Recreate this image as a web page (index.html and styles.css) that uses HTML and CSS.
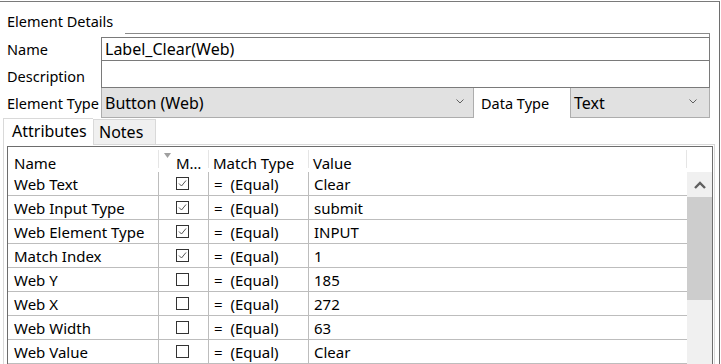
FILE: index.html
```html
<!DOCTYPE html>
<html lang="en">
<head>
    <meta charset="UTF-8">
    <title>Element Details</title>
    <link rel="stylesheet" href="styles.css">
</head>
<body>

<div class="frame">
    <div class="details">
        <div class="group-head">
            <span class="group-title">Element Details</span>
            <span class="group-rule"></span>
        </div>
        <div class="field-row">
            <span class="field-label">Name</span>
            <div class="textbox">Label_Clear(Web)</div>
        </div>
        <div class="field-row">
            <span class="field-label label-desc">Description</span>
            <div class="textbox textbox-desc"></div>
        </div>
        <div class="field-row">
            <span class="field-label">Element Type</span>
            <div class="combo combo-type">
                <span>Button (Web)</span>
                <svg class="chevron" width="8" height="5" viewBox="0 0 8 5"><polyline points="0.5,0.5 4,4 7.5,0.5" fill="none" stroke="#606060" stroke-width="1"/></svg>
            </div>
            <span class="data-label">Data Type</span>
            <div class="combo combo-data">
                <span>Text</span>
                <svg class="chevron" width="8" height="5" viewBox="0 0 8 5"><polyline points="0.5,0.5 4,4 7.5,0.5" fill="none" stroke="#606060" stroke-width="1"/></svg>
            </div>
        </div>
    </div>

    <div class="tabs">
        <div class="tab tab-active">Attributes</div>
        <div class="tab">Notes</div>
        <div class="tab-fill"></div>
    </div>

    <div class="page">
        <div class="grid">
            <div class="grid-body">
                <div class="head-row">
                    <div class="hcell hcell-name">Name</div>
                    <div class="hcell hcell-m">
                        <svg class="sort" width="7" height="5" viewBox="0 0 7 5"><polygon points="0,0 7,0 3.5,5" fill="#a0a0a0"/></svg>
                        <span>M…</span>
                    </div>
                    <div class="hcell">Match Type</div>
                    <div class="hcell">Value</div>
                </div>
                <div id="rows"></div>
            </div>
            <div class="scrollbar">
                <div class="sb-head"></div>
                <div class="sb-up">
                    <svg width="12" height="8" viewBox="0 0 12 8"><polyline points="1,7 6,2 11,7" fill="none" stroke="#606060" stroke-width="2.4"/></svg>
                </div>
                <div class="sb-thumb"></div>
                <div class="sb-track"></div>
            </div>
        </div>
    </div>
</div>

<script>
    const attributes = [
        { name: 'Web Text', checked: true, value: 'Clear' },
        { name: 'Web Input Type', checked: true, value: 'submit' },
        { name: 'Web Element Type', checked: true, value: 'INPUT' },
        { name: 'Match Index', checked: true, value: '1' },
        { name: 'Web Y', checked: false, value: '185' },
        { name: 'Web X', checked: false, value: '272' },
        { name: 'Web Width', checked: false, value: '63' },
        { name: 'Web Value', checked: false, value: 'Clear' }
    ];

    const tick = '<polyline points="3,6.5 5.5,9 10,3.5" fill="none" stroke="#555" stroke-width="1"/>';

    const rows = document.getElementById('rows');
    attributes.forEach((item) => {
        const div = document.createElement('div');
        div.classList.add('row');
        div.innerHTML = `
            <div class="cell cell-name">${item.name}</div>
            <div class="cell cell-check">
                <svg width="13" height="13" viewBox="0 0 13 13"><rect x="0.5" y="0.5" width="12" height="12" fill="#fff" stroke="#333"/>${item.checked ? tick : ''}</svg>
            </div>
            <div class="cell">=&nbsp;&nbsp;(Equal)</div>
            <div class="cell">${item.value}</div>
        `;
        rows.appendChild(div);
    });
</script>

</body>
</html>
```

FILE: styles.css
```css
body {
    margin: 0;
    background-color: white;
    font-family: "Noto Sans", sans-serif;
    font-size: 14.5px;
    line-height: 18px;
    color: #000;
    white-space: nowrap;
}
.frame {
    margin-top: 1px;
    width: 720px;
    height: 363px;
    box-sizing: border-box;
    border-top: 1px solid #7a7a7a;
    border-right: 1px solid #6e6e6e;
    overflow: hidden;
}

/* Element details group */
.details {
    width: 710px;
    padding-left: 7px;
    box-sizing: border-box;
}
.group-head {
    display: flex;
    height: 35px;
}
.group-title {
    margin-top: 10px;
}
.group-rule {
    margin-left: auto;
    margin-top: 31px;
    width: 585px;
    height: 4px;
    box-sizing: border-box;
    border-top: 1px solid #8a8a8a;
    border-right: 1px solid #8a8a8a;
}
.field-row {
    display: flex;
}
.field-label {
    width: 94px;
    display: flex;
    align-items: center;
}
.label-desc {
    padding-top: 2px;
}
.textbox {
    width: 609px;
    height: 24px;
    box-sizing: border-box;
    border: 1px solid #7a7a7a;
    padding-left: 3px;
    display: flex;
    align-items: center;
    font-size: 16px;
}
.textbox-desc {
    height: 27px;
    border-top: none;
}
.combo {
    height: 30px;
    box-sizing: border-box;
    border: 1px solid #adadad;
    border-top: none;
    background-color: #e1e1e1;
    display: flex;
    align-items: center;
    justify-content: space-between;
    padding-left: 3px;
    font-size: 16px;
}
.combo-type {
    width: 373px;
    padding-right: 9px;
}
.combo-data {
    width: 140px;
    padding-right: 12px;
}
.chevron {
    display: block;
    margin-top: -3px;
}
.data-label {
    width: 96px;
    padding-left: 7px;
    box-sizing: border-box;
    display: flex;
    align-items: center;
}

/* Tabs */
.tabs {
    display: flex;
    align-items: flex-end;
    height: 27px;
    width: 712px;
    margin-left: 3px;
    font-size: 16px;
}
.tab {
    height: 26px;
    box-sizing: border-box;
    border: 1px solid #d9d9d9;
    background-color: #f0f0f0;
    padding-left: 5px;
    width: 63px;
    display: flex;
    align-items: center;
}
.tab-active {
    height: 27px;
    width: 90px;
    border-right: none;
    border-bottom: none;
    background-color: white;
    padding-left: 8px;
    padding-bottom: 3px;
}
.tab-fill {
    flex: 1;
    height: 1px;
    background-color: #d9d9d9;
}

/* Attribute grid */
.page {
    width: 712px;
    height: 230px;
    margin-left: 3px;
    box-sizing: border-box;
    border: 1px solid #d9d9d9;
    border-top: none;
    padding: 1px 1px 0 3px;
    font-size: 15px;
}
.grid {
    display: flex;
    width: 706px;
    height: 240px;
    box-sizing: border-box;
    border: 1px solid #6d6d6d;
}
.grid-body {
    width: 679px;
}
.head-row, .row {
    display: grid;
    grid-template-columns: 151px 50px 100px 1fr;
}
.head-row {
    height: 25px;
}
.hcell {
    height: 25px;
    box-sizing: border-box;
    padding-top: 6px;
    padding-left: 4px;
    background: linear-gradient(#e5e5e5, #e5e5e5) right 3px / 1px 18px no-repeat;
    display: flex;
    align-items: center;
}
.hcell-name {
    padding-left: 6px;
}
.hcell-m {
    padding-left: 5px;
}
.hcell-m span {
    margin-left: 5px;
}
.sort {
    align-self: flex-start;
    margin-top: 0;
}
.row {
    height: 24px;
    box-sizing: border-box;
    border-bottom: 1px solid #bdbdbd;
}
.cell {
    border-right: 1px solid #bdbdbd;
    padding-left: 5px;
    padding-top: 1px;
    display: flex;
    align-items: center;
}
.cell:last-child {
    border-right: none;
}
.cell-name {
    padding-left: 6px;
}
.cell-check {
    padding-left: 17px;
    padding-top: 0;
}
.cell-check svg {
    display: block;
}
.scrollbar {
    width: 25px;
    display: flex;
    flex-direction: column;
}
.sb-head {
    height: 25px;
}
.sb-up {
    height: 25px;
    background-color: #f0f0f0;
    display: flex;
    align-items: center;
    justify-content: center;
}
.sb-thumb {
    height: 103px;
    background-color: #cdcdcd;
}
.sb-track {
    flex: 1;
    background-color: #f0f0f0;
}
```
